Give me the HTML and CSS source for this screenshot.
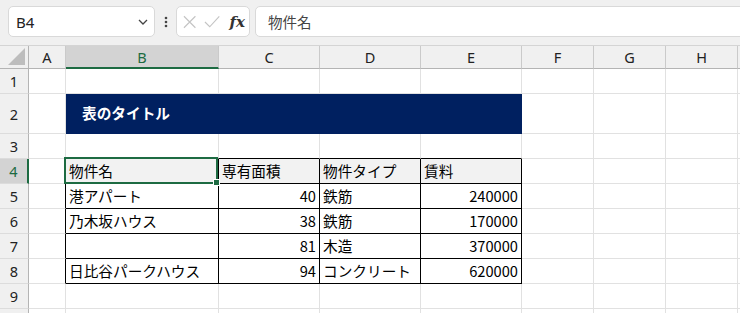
FILE: index.html
```html
<!DOCTYPE html>
<html lang="ja">

<head>
    <meta charset="UTF-8">
    <title>表のタイトル</title>
    <link rel="stylesheet" href="styles.css">
</head>

<body>
    <!-- formula bar -->
    <div class="toolbar">
        <div class="namebox">
            <span>B4</span>
            <svg class="chevron" width="10" height="6" viewBox="0 0 10 6">
                <path d="M1 1 L5 5 L9 1" fill="none" stroke="#444" stroke-width="1.3" />
            </svg>
        </div>
        <div class="dots">
            <svg width="4" height="12" viewBox="0 0 4 12">
                <circle cx="2" cy="2" r="1.3" fill="#444" />
                <circle cx="2" cy="6" r="1.3" fill="#444" />
                <circle cx="2" cy="10" r="1.3" fill="#444" />
            </svg>
        </div>
        <div class="fxbox">
            <svg width="14" height="14" viewBox="0 0 14 14">
                <path d="M1 1 L13 13 M13 1 L1 13" stroke="#c4c4c4" stroke-width="1.2" />
            </svg>
            <svg width="17" height="14" viewBox="0 0 17 14">
                <path d="M1 7 L6 12 L16 1" fill="none" stroke="#c4c4c4" stroke-width="1.2" />
            </svg>
            <span class="fx">fx</span>
        </div>
        <div class="formula">物件名</div>
    </div>

    <!-- sheet grid -->
    <div class="sheet">
        <div class="corner">
            <svg width="17" height="17" viewBox="0 0 17 17">
                <path d="M17 0 L17 17 L0 17 Z" fill="#bdbdbd" />
            </svg>
        </div>
        <div class="ch">A</div>
        <div class="ch sel">B</div>
        <div class="ch">C</div>
        <div class="ch">D</div>
        <div class="ch">E</div>
        <div class="ch">F</div>
        <div class="ch">G</div>
        <div class="ch">H</div>
        <div class="ch"></div>

        <div class="rh">1</div>
        <div class="c"></div><div class="c"></div><div class="c"></div><div class="c"></div>
        <div class="c"></div><div class="c"></div><div class="c"></div><div class="c"></div><div class="c"></div>

        <div class="rh">2</div>
        <div class="c"></div>
        <div class="c title">表のタイトル</div>
        <div class="c"></div><div class="c"></div><div class="c"></div><div class="c"></div>

        <div class="rh">3</div>
        <div class="c"></div>
        <div class="c above"></div><div class="c above"></div><div class="c above"></div><div class="c above"></div>
        <div class="c"></div><div class="c"></div><div class="c"></div><div class="c"></div>

        <div class="rh selrow">4</div>
        <div class="c beside"></div>
        <div class="c tb th">物件名</div>
        <div class="c tb th">専有面積</div>
        <div class="c tb th">物件タイプ</div>
        <div class="c tb th">賃料</div>
        <div class="c"></div><div class="c"></div><div class="c"></div><div class="c"></div>

        <div class="rh">5</div>
        <div class="c beside"></div>
        <div class="c tb">港アパート</div>
        <div class="c tb num">40</div>
        <div class="c tb">鉄筋</div>
        <div class="c tb num">240000</div>
        <div class="c"></div><div class="c"></div><div class="c"></div><div class="c"></div>

        <div class="rh">6</div>
        <div class="c beside"></div>
        <div class="c tb">乃木坂ハウス</div>
        <div class="c tb num">38</div>
        <div class="c tb">鉄筋</div>
        <div class="c tb num">170000</div>
        <div class="c"></div><div class="c"></div><div class="c"></div><div class="c"></div>

        <div class="rh">7</div>
        <div class="c beside"></div>
        <div class="c tb"></div>
        <div class="c tb num">81</div>
        <div class="c tb">木造</div>
        <div class="c tb num">370000</div>
        <div class="c"></div><div class="c"></div><div class="c"></div><div class="c"></div>

        <div class="rh">8</div>
        <div class="c beside"></div>
        <div class="c tb">日比谷パークハウス</div>
        <div class="c tb num">94</div>
        <div class="c tb">コンクリート</div>
        <div class="c tb num">620000</div>
        <div class="c"></div><div class="c"></div><div class="c"></div><div class="c"></div>

        <div class="rh">9</div>
        <div class="c"></div><div class="c"></div><div class="c"></div><div class="c"></div>
        <div class="c"></div><div class="c"></div><div class="c"></div><div class="c"></div><div class="c"></div>

        <div class="rh"></div>
        <div class="c"></div><div class="c"></div><div class="c"></div><div class="c"></div>
        <div class="c"></div><div class="c"></div><div class="c"></div><div class="c"></div><div class="c"></div>

        <!-- active cell B4 -->
        <div class="active"><span class="handle"></span></div>
    </div>
</body>

</html>
```

FILE: styles.css
```css
* {
    margin: 0;
    padding: 0;
    box-sizing: border-box;
}

body {
    width: 740px;
    height: 313px;
    overflow: hidden;
    background-color: #fff;
    font-family: "Noto Sans CJK JP", sans-serif;
}

/* Formula bar */
.toolbar {
    height: 46px;
    display: flex;
    align-items: flex-start;
    padding: 6px 0 0 8px;
    background-color: #f0f0f0;
    border-bottom: 1px solid #d4d4d4;
}

.namebox,
.fxbox,
.formula {
    height: 31px;
    background-color: #fff;
    border: 1px solid #d9d9d9;
    border-radius: 5px;
    display: flex;
    align-items: center;
}

.namebox {
    width: 147px;
    padding: 0 6px 0 7px;
    justify-content: space-between;
    font-family: "Noto Sans", sans-serif;
    font-size: 15px;
    color: #222;
}

.chevron {
    margin-top: 1px;
}

.dots {
    width: 21px;
    height: 31px;
    display: flex;
    align-items: center;
    justify-content: center;
}

.fxbox {
    width: 74px;
    padding: 0 4px 0 6px;
    gap: 8px;
}

.fx {
    font-family: "DejaVu Serif", serif;
    font-style: italic;
    font-weight: bold;
    font-size: 15px;
    color: #333;
    margin-left: 1px;
}

.formula {
    flex: 1;
    margin-left: 5px;
    margin-right: -10px;
    padding-left: 12px;
    font-size: 14.5px;
    color: #444;
}

/* Sheet */
.sheet {
    position: relative;
    display: grid;
    grid-template-columns: 29px 37px 153px 101px 101px 101px 72px 72px 72px 1fr;
    grid-template-rows: 23px 25px 40px 25px 25px 25px 25px 25px 25px 25px 5px;
}

.corner,
.ch,
.rh {
    background-color: #f0f0f0;
    font-family: "Noto Sans", sans-serif;
    font-size: 14.5px;
    color: #222;
    display: flex;
    align-items: center;
    justify-content: center;
}

.corner {
    align-items: flex-end;
    justify-content: flex-end;
    padding: 0 3px 3px 0;
    border-right: 1px solid #b4b4b4;
    border-bottom: 1px solid #b4b4b4;
}

.ch {
    border-right: 1px solid #cacaca;
    border-bottom: 1px solid #b4b4b4;
}

.ch.sel {
    background-color: #d3d3d3;
    color: #1d6b42;
    border-bottom: 2px solid #1d6b42;
}

.rh {
    border-right: 1px solid #b4b4b4;
    border-bottom: 1px solid #dcdcdc;
}

.rh.selrow {
    background-color: #d3d3d3;
    color: #1d6b42;
    border-right: 2px solid #1d6b42;
}

.c {
    border-right: 1px solid #e1e1e1;
    border-bottom: 1px solid #e1e1e1;
    display: flex;
    align-items: center;
    padding: 0 3px 2px 3px;
    font-size: 14.67px;
    color: #000;
    white-space: nowrap;
}

.title {
    grid-column: span 4;
    background-color: #002060;
    border-color: #002060;
    color: #fff;
    font-weight: bold;
    padding-left: 16px;
}

/* table borders */
.above {
    border-bottom-color: #000;
}

.beside {
    border-right-color: #000;
}

.tb {
    border-right-color: #000;
    border-bottom-color: #000;
}

.th {
    background-color: #f2f2f2;
}

.num {
    justify-content: flex-end;
}

/* active cell outline */
.active {
    position: absolute;
    left: 64px;
    top: 111px;
    width: 154px;
    height: 27px;
    border: 2px solid #1d6b42;
}

.handle {
    position: absolute;
    right: -4px;
    bottom: -4px;
    width: 7px;
    height: 7px;
    background-color: #1d6b42;
    border: 1px solid #fff;
}
```
